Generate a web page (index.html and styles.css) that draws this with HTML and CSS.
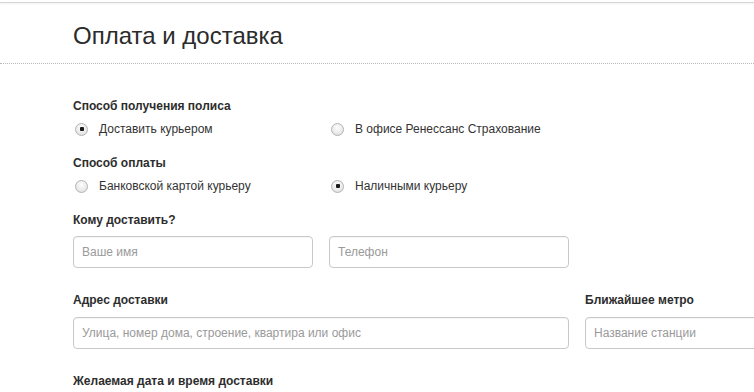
FILE: index.html
```html
<!DOCTYPE html>
<html lang="ru">
<head>
<meta charset="utf-8">
<link rel="stylesheet" href="styles.css">
</head>
<body>
<div class="topline"></div>
<header class="head">
  <h1 class="title">Оплата и доставка</h1>
</header>
<main class="form">
  <div class="label">Способ получения полиса</div>
  <div class="row radios">
    <label class="radio"><span class="dot checked"></span>Доставить курьером</label>
    <label class="radio"><span class="dot"></span>В офисе Ренессанс Страхование</label>
  </div>
  <div class="label">Способ оплаты</div>
  <div class="row radios">
    <label class="radio"><span class="dot"></span>Банковской картой курьеру</label>
    <label class="radio"><span class="dot checked"></span>Наличными курьеру</label>
  </div>
  <div class="label gap-top-small">Кому доставить?</div>
  <div class="row inputs">
    <input class="field" type="text" placeholder="Ваше имя">
    <input class="field" type="text" placeholder="Телефон">
  </div>
  <div class="row labels-row">
    <div class="label span2">Адрес доставки</div>
    <div class="label">Ближайшее метро</div>
  </div>
  <div class="row inputs">
    <input class="field span2" type="text" placeholder="Улица, номер дома, строение, квартира или офис">
    <input class="field" type="text" placeholder="Название станции">
  </div>
  <div class="label">Желаемая дата и время доставки</div>
</main>
</body>
</html>
```

FILE: styles.css
```css
html, body {
  margin: 0;
  padding: 0;
  background: #fff;
  font-family: "Liberation Sans", Arial, sans-serif;
  color: #333;
  overflow: hidden;
}
body {
  padding-top: 2px;
}
.topline {
  height: 1px;
  background: #d6d6d6;
  box-shadow: 0 1px 2px rgba(0,0,0,0.08);
}
.head {
  border-bottom: 1px dotted #b8b8b8;
  padding: 18px 0 12px 73px;
}
.title {
  margin: 0;
  font-size: 24px;
  line-height: 30px;
  font-weight: normal;
  color: #2b2b2b;
}
.form {
  padding: 33px 0 0 73px;
  width: 760px;
}
.label {
  font-size: 12px;
  font-weight: bold;
  line-height: 18px;
  color: #2d2d2d;
  margin-bottom: 5px;
}
.row {
  display: grid;
  grid-template-columns: 240px 240px 240px;
  column-gap: 16px;
}
.radios {
  margin-bottom: 16px;
}
.radio {
  display: flex;
  align-items: center;
  height: 18px;
  font-size: 12px;
  color: #333;
  padding-left: 2px;
}
.dot {
  box-sizing: border-box;
  width: 13px;
  height: 13px;
  border-radius: 50%;
  border: 1px solid #b3b3b3;
  background: radial-gradient(circle at 50% 35%, #fdfdfd 0%, #e6e6e6 70%, #d6d6d6 100%);
  margin-right: 11px;
  position: relative;
  flex: none;
}
.dot.checked::after {
  content: "";
  position: absolute;
  left: 3.5px;
  top: 3.5px;
  width: 4px;
  height: 4px;
  background: #1a1a1a;
  border-radius: 1px;
}
.gap-top-small {
  margin-bottom: 7px;
}
.inputs {
  margin-bottom: 23px;
}
.labels-row .label {
  margin-bottom: 8px;
}
.span2 {
  grid-column: span 2;
}
.field {
  box-sizing: border-box;
  height: 32px;
  width: 100%;
  border: 1px solid #c8c8c8;
  border-radius: 4px;
  padding: 0 8px;
  font-family: "Liberation Sans", Arial, sans-serif;
  font-size: 12px;
  color: #333;
  background: #fff;
  box-shadow: inset 0 1px 1px rgba(0,0,0,0.04);
  outline: none;
}
.field::placeholder {
  color: #9a9a9a;
}
```
